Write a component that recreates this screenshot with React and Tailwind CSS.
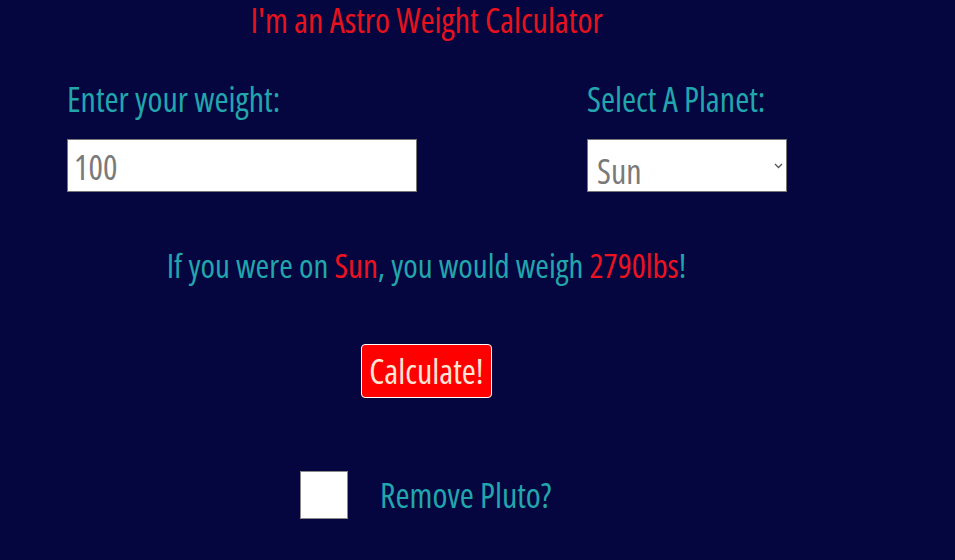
import React from "react";

const font = { fontFamily: '"Open Sans", sans-serif', fontStretch: "75%" };

export default function App() {
  return (
    <div className="min-h-screen w-full bg-[#05053f]" style={font}>
      <div className="w-[853px] text-center">
        <h1 className="text-[#e8121c] text-[34px] leading-[40px] font-medium">I'm an Astro Weight Calculator</h1>
        <div className="mt-[39px] flex">
          <div className="ml-[67px] w-[350px] text-left">
            <label className="block text-[#22a6ad] text-[34px] leading-[40px] font-medium whitespace-nowrap">Enter your weight:</label>
            <input
              type="text"
              defaultValue="100"
              style={font}
              className="mt-[20px] block h-[53px] w-[350px] border border-[#767676] bg-white px-[6px] pt-[2px] text-[34px] text-[#7a7a7a] outline-none"
            />
          </div>
          <div className="ml-[170px] w-[200px] text-left">
            <label className="block text-[#22a6ad] text-[34px] leading-[40px] font-medium whitespace-nowrap">Select A Planet:</label>
            <div className="relative mt-[20px] h-[53px] w-[200px]">
              <select
                style={font}
                className="block h-[53px] w-[200px] appearance-none border border-[#767676] bg-white pl-[9px] pt-[6px] text-[34px] text-[#7a7a7a] outline-none"
              >
                <option>Sun</option>
              </select>
              <svg className="pointer-events-none absolute right-[4px] top-[24px]" width="9" height="6" viewBox="0 0 9 6">
                <path d="M1 1 L4.5 4.5 L8 1" fill="none" stroke="#555" strokeWidth="1.3" />
              </svg>
            </div>
          </div>
        </div>
        <p className="mt-[54px] text-[33px] leading-[40px] font-medium text-[#22a6ad]">
          If you were on <span className="text-[#ee1220]">Sun</span>, you would weigh{" "}
          <span className="text-[#ee1220]">2790lbs</span>!
        </p>
        <div className="mt-[58px] flex justify-center">
          <button
            style={font}
            className="h-[54px] w-[131px] rounded-[4px] border border-white bg-[#ff0000] p-0 text-[34px] font-medium text-[#ffe6d6]"
          >
            Calculate!
          </button>
        </div>
        <div className="mt-[73px] flex items-center">
          <div className="ml-[300px] h-[48px] w-[48px] border border-[#8a8a8a] bg-white" />
          <span className="ml-[32px] text-[34px] leading-[40px] font-medium text-[#22a6ad]">Remove Pluto?</span>
        </div>
      </div>
    </div>
  );
}
